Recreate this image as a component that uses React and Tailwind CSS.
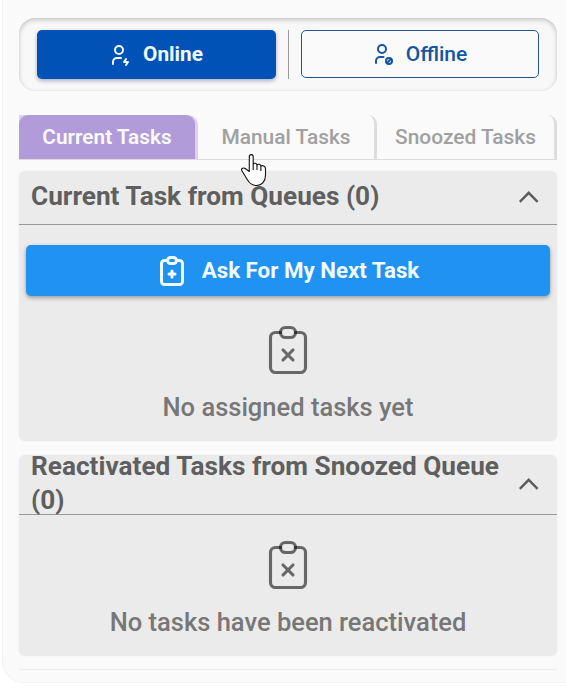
import React from "react";

function UserIcon({ children }) {
  return (
    <svg className="size-6 shrink-0" viewBox="0 0 24 24" fill="none" stroke="currentColor" strokeWidth="2" strokeLinecap="round" strokeLinejoin="round">
      <path d="M8 7a4 4 0 1 0 8 0a4 4 0 0 0 -8 0" />
      {children}
    </svg>
  );
}

function Clipboard({ className, width, mark }) {
  return (
    <svg className={"shrink-0 " + className} viewBox="0 0 24 24" fill="none" stroke="currentColor" strokeWidth={width} strokeLinecap="round" strokeLinejoin="round">
      <path d="M9 5h-2a2 2 0 0 0 -2 2v12a2 2 0 0 0 2 2h10a2 2 0 0 0 2 -2v-12a2 2 0 0 0 -2 -2h-2" />
      <path d="M9 5a2 2 0 0 1 2 -2h2a2 2 0 0 1 0 4h-2a2 2 0 0 1 -2 -2z" />
      <path d={mark} />
    </svg>
  );
}

function Chevron() {
  return (
    <svg className="h-3 w-5 shrink-0" viewBox="0 0 20 12" fill="none" stroke="#5c5c5c" strokeWidth="2.4">
      <path d="M0.8 10.8L9.7 1.8L18.6 10.8" />
    </svg>
  );
}

function Panel({ title, className, children }) {
  return (
    <section className={"flex flex-col rounded-md bg-[#ebebeb] shadow-[0_0_3px_rgba(0,0,0,0.05)] " + className}>
      {title}
      {children}
    </section>
  );
}

function Header({ children, className }) {
  return (
    <header className={"flex items-center justify-between border-b border-[#999] pr-[18px] pb-[2px] pl-3 " + className}>
      <h2 className="w-[478px] pb-[2px] text-[26.2px] leading-[34px] font-bold tracking-[0.01px] text-[#5f5f5f]">{children}</h2>
      <Chevron />
    </header>
  );
}

function Empty({ children, className }) {
  return (
    <div className={"flex flex-col items-center " + className}>
      <Clipboard className="size-[60px] text-[#000]/56" width="1.25" mark="M10 12l4 4m0 -4l-4 4" />
      <p className="mt-[10px] text-[25.5px] leading-[34px] font-medium text-[#777]">{children}</p>
    </div>
  );
}

export default function App() {
  return (
    <main className="h-[688px] w-[566px] overflow-hidden bg-white pl-0.5 font-['Roboto',sans-serif]">
      <div className="h-[683px] rounded-bl-[22px] border-b border-l border-[#f3f3f3] bg-[#fafafa] pt-[18px] pr-[9px] pl-4">
        <div className="flex h-[73px] items-start rounded-[16px] bg-[#f8f8f8] px-[18px] pt-3 shadow-[inset_0_2px_5px_rgba(0,0,0,0.2),inset_0_0_2px_rgba(0,0,0,0.08)]">
          <button className="flex h-[49px] w-[239px] items-center justify-center gap-3 rounded-[5px] bg-[#0052b7] pr-[3px] text-[20.8px] font-bold text-[#f0f9ff] shadow-[0_2px_4px_rgba(0,0,80,0.3)]">
            <UserIcon>
              <path d="M6 21v-2a4 4 0 0 1 4 -4h4" />
              <path d="M19 16l-2 3h4l-2 3" />
            </UserIcon>
            Online
          </button>
          <div className="mx-3 h-[49px] w-px bg-[#999]" />
          <button className="flex h-12 w-[238px] items-center justify-center gap-3 rounded-[5px] border border-[#25558c] bg-[#fafafa] pr-[3px] text-[21px] font-medium text-[#1455a6]">
            <UserIcon>
              <path d="M6 21v-2a4 4 0 0 1 4 -4h3.5" />
              <path d="M16 19a3 3 0 1 0 6 0a3 3 0 1 0 -6 0" />
              <path d="M17 21l4 -4" />
            </UserIcon>
            <span className="pt-px">Offline</span>
          </button>
        </div>

        <nav className="mt-6 flex h-[45px] border-b border-[#dcdcdc] text-[20.9px] font-medium text-[#a0a0a0]">
          <div className="flex w-[179px] rounded-tr-[10px] bg-[#ddd1ef]">
            <div className="flex w-[176px] items-center justify-center rounded-t-[9px] bg-[#b19cd9] pt-px text-[20.8px] font-semibold text-[#fafafa]">Current Tasks</div>
          </div>
          <div className="flex w-[179px] items-center justify-center rounded-tr-[9px] border-r-[3px] border-[#ddd] pt-px">Manual Tasks</div>
          <div className="flex w-[180px] items-center justify-center rounded-tr-[9px] border-r-[3px] border-[#ddd] pt-px">Snoozed Tasks</div>
        </nav>

        <Panel className="mt-[11px] h-[270px]" title={<Header className="h-[54px]">Current Task from Queues (0)</Header>}>
          <button className="mx-[7px] mt-5 flex h-[51px] shrink-0 items-center justify-center gap-3 rounded-[5px] bg-[#2092f2] pr-[3px] text-[22.3px] font-bold text-[#f0fbff] shadow-[0_2px_4px_rgba(0,0,0,0.35)]">
            <Clipboard className="size-9" width="2" mark="M10 14h4M12 12v4" />
            Ask For My Next Task
          </button>
          <Empty className="mt-6">No assigned tasks yet</Empty>
        </Panel>

        <Panel className="mt-[14px] h-[201px]" title={<Header className="h-[60px]">Reactivated Tasks from Snoozed Queue (0)</Header>}>
          <Empty className="mt-5">No tasks have been reactivated</Empty>
        </Panel>

        <div className="mt-[13px] h-px bg-[#ededed]" />
      </div>

      <svg className="absolute top-[153px] left-[240px] h-[34px] w-[27px]" viewBox="0 0 27 34" fill="white" stroke="#111" strokeWidth="1.1" strokeLinejoin="round">
        <path d="M9.3 18.5V3.7C9.3 .9 13.2 .9 13.2 3.7V11.2C14 9.7 16.8 10 17 12C18 10.6 20.7 11.2 20.9 13.2C22.2 12 25.5 12.8 25.5 15.7V22C25.5 28.5 21.8 32.5 16.3 32.5C11.7 32.5 9.3 30 7.2 26.5L1.8 17.5C.8 15.5 3.5 14.2 5.2 15.5Z" />
        <path d="M13.2 11.2V17M17 12V17M20.9 13.2V18" />
      </svg>
    </main>
  );
}
